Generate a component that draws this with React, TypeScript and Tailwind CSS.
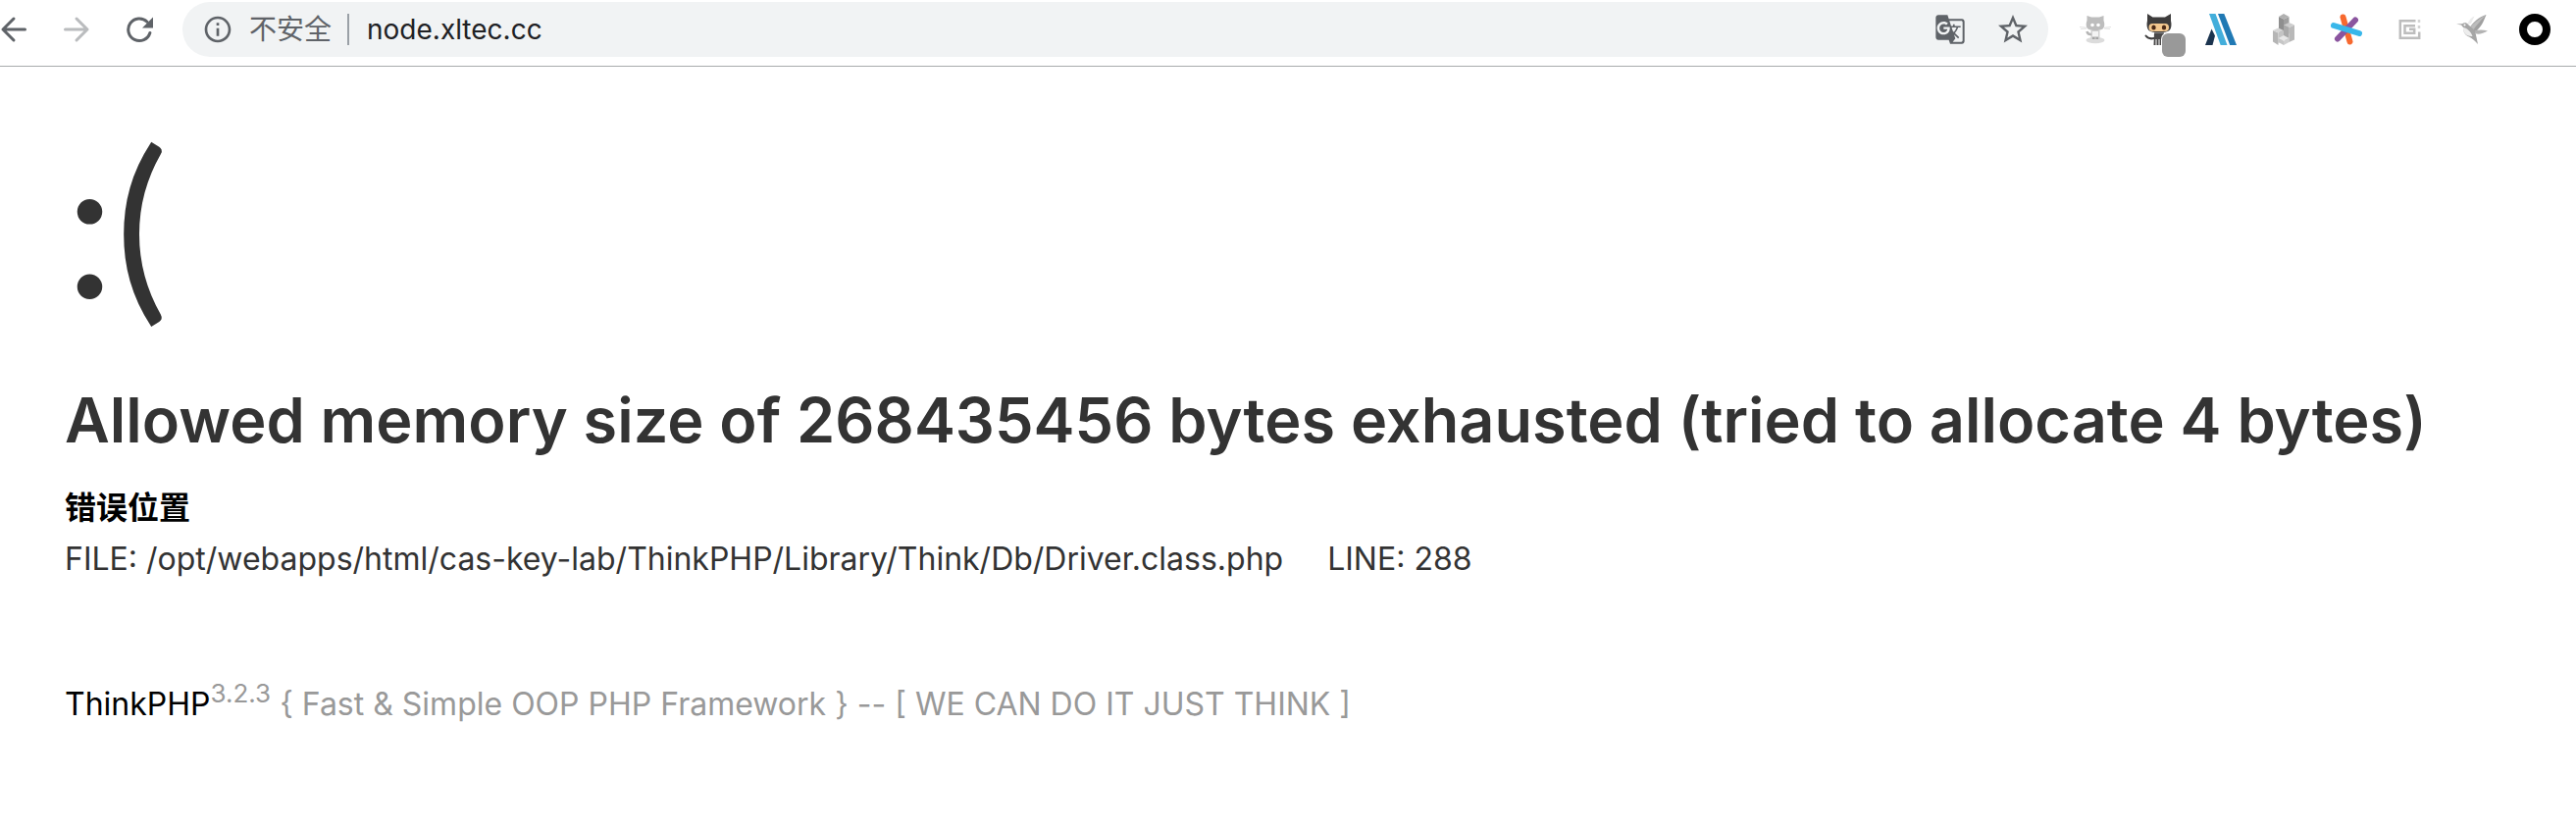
import type { ReactNode } from "react";
import { MdGTranslate, MdStarBorder, MdInfoOutline } from "react-icons/md";

function IconButton({ label, children }: { label: string; children: ReactNode }) {
  return (
    <button type="button" aria-label={label} className="relative shrink-0">
      {children}
    </button>
  );
}

function BackIcon() {
  return (
    <svg className="h-7 w-7" viewBox="0 0 28 28" fill="none" stroke="#5f6368" strokeWidth="3" strokeLinecap="round" strokeLinejoin="round">
      <path d="M25.5 14H3M14 3 3 14l11 11" />
    </svg>
  );
}

function ForwardIcon() {
  return (
    <svg className="h-7 w-7" viewBox="0 0 28 28" fill="none" stroke="#babcbe" strokeWidth="3" strokeLinecap="round" strokeLinejoin="round">
      <path d="M2.5 14H25M14 3l11 11-11 11" />
    </svg>
  );
}

function ReloadIcon() {
  return (
    <svg className="h-7 w-7" viewBox="0 0 28 28">
      <path d="M22 6.200A11.3 11.3 0 1 0 24.900 17.500" fill="none" stroke="#5f6368" strokeWidth="3" strokeLinecap="round" />
      <path d="M28 1.5V12.500H17z" fill="#5f6368" />
    </svg>
  );
}

function GrayCatIcon() {
  return (
    <svg className="h-8 w-8" viewBox="0 0 32 32">
      <ellipse cx="16" cy="27" rx="9.500" ry="3.200" fill="#dcdcdc" />
      <path d="M0 13.5l7 .8M1 15.500l6-.5M32 13.5l-7 .8M31 15.500l-6-.5" stroke="#e2e2e2" strokeWidth="1" />
      <path d="M7.500 2 12 3.500h8L24.500 2v5c1.300 3 1 7-1 8.500-2 1.300-5 1.500-7.500 1.500s-5.500-.2-7.500-1.500c-2-1.500-2.300-5.500-1-8.500z" fill="#bdbdbd" />
      <circle cx="13" cy="11.500" r="1.800" fill="#fff" />
      <circle cx="19" cy="11.500" r="1.800" fill="#fff" />
      <path d="M11.500 17h9v9h-9z" fill="#d0d0d0" />
      <path d="M13 18h6v5h-6z" fill="#f4f4f4" />
      <path d="M13 24h2.500v2H13zM16.500 24H19v2h-2.500z" fill="#a5a5a5" />
      <path d="M12 21c-3 .5-4-.5-4.500-3" fill="none" stroke="#b5b5b5" strokeWidth="2.500" />
    </svg>
  );
}

function OctocatIcon() {
  return (
    <svg className="h-8 w-8" viewBox="0 0 32 32">
      <path d="M5 0l5.500 3.500h12.500L29 0v7c1 4 .5 8-1.500 10-2 1.800-6 2.300-10.500 2.300S8.500 18.800 6.500 17C4.500 15 4 11 5 7z" fill="#3d3c3c" />
      <rect x="6.500" y="10" width="20.500" height="8" rx="4" fill="#f3c88f" />
      <ellipse cx="11.500" cy="14" rx="2.200" ry="2.500" fill="#4a2a17" />
      <ellipse cx="22" cy="14" rx="2.200" ry="2.500" fill="#4a2a17" />
      <path d="M3.500 22.500c2 2.500 4.500 3.500 8 2.500" fill="none" stroke="#3d3c3c" strokeWidth="2" strokeLinecap="round" />
      <path d="M12 19.500h10V32h-1.500v-6h-1v6h-2v-6h-1v6h-2v-6h-1v6H11.500z" fill="#4a4949" />
    </svg>
  );
}

function StripesIcon() {
  return (
    <svg className="h-8 w-8" viewBox="0 0 32 32">
      <path d="M0 32 6.500 15.500 10 22.500 7.500 32z" fill="#1b344f" />
      <path d="M4 0h6.500l12 32h-6.800z" fill="#43aedb" />
      <path d="M13 0h6.300L32 32h-6.800z" fill="#2079b4" />
    </svg>
  );
}

function BlocksIcon() {
  return (
    <svg className="h-8 w-8" viewBox="0 0 32 32">
      <path d="M11 3l5 2.500V22l-5-2z" fill="#8f8f8f" />
      <path d="M16 5.500 21.500 3v17L16 22z" fill="#9f9f9f" />
      <path d="M11 3 16 0l5.500 3L16 5.500z" fill="#b0b0b0" />
      <path d="M16 11.500l5.500 2.500v15L16 26z" fill="#a9a9a9" />
      <path d="M21.500 14 27 11.500v15L21.500 29z" fill="#b9b9b9" />
      <path d="M16 11.500 21.500 9l5.500 2.500-5.500 2.500z" fill="#cdcdcd" />
      <path d="M5 17l5.500 2.500V32L5 28.500z" fill="#b5b5b5" />
      <path d="M10.500 19.500 16 17v9l-5.500 4z" fill="#c4c4c4" />
      <path d="M5 17l5.500-2.500L16 17l-5.500 2.500z" fill="#d6d6d6" />
      <path d="M10.500 25l5.500 2.500V32l-5.500-3z" fill="#c6c6c6" />
      <path d="M16 27.500l5.500-2.500v4L16 32z" fill="#d0d0d0" />
      <path d="M10.500 25l5.500-3 5.500 3-5.500 2.500z" fill="#e8e8e8" />
    </svg>
  );
}

function AsteriskIcon() {
  return (
    <svg className="h-8 w-8" viewBox="0 0 32 32" fill="none" strokeWidth="6" strokeLinecap="round">
      <path d="M12.500 3.500l7 25" stroke="#f7692f" />
      <path d="M25 6.500 7 25.500" stroke="#8b559f" />
      <path d="M3 12l26 8" stroke="#38b7ea" />
    </svg>
  );
}

function SpiralIcon() {
  return (
    <svg className="h-8 w-8" viewBox="0 0 32 32" fill="none" stroke="#bdbdbd" strokeWidth="2.500">
      <path d="M22.500 7.300H6.800v17.400h19.400V18.500" />
      <path d="M22 12.300H11.500v7.400h9.700v-4H16" />
      <path d="M26 6v3M26 12v3" stroke="#d4d4d4" />
    </svg>
  );
}

function BirdIcon() {
  return (
    <svg className="h-8 w-8" viewBox="0 0 32 32">
      <path d="M11 11C13 6 16 3.500 18.500 2.500L15 10z" fill="#ececec" />
      <path d="M13 15C17 9 23 3 30.500 1 28 7 26 13 20 18z" fill="#a0a0a0" />
      <path d="M13 15C17 10 23 5 30.500 1 25 7 20 12 17 17z" fill="#bcbcbc" />
      <path d="M18 17.500c5-1.500 9-1.500 14 0-4 2.500-8 3.500-12 3z" fill="#b3b3b3" />
      <path d="M0 10.500l6-.3C8 8.500 11 9 12 11l7 6 3 14c-4-4-6-6-9-7.500-5-2-6-6-5.500-9L5 11.500z" fill="#a6a6a6" />
      <path d="M7 14c3 0 8 4 9.500 9C10 23.500 6.500 19 7 14z" fill="#ededed" />
      <circle cx="8.500" cy="11.500" r="1" fill="#fff" />
    </svg>
  );
}

function RingIcon() {
  return (
    <svg className="h-8 w-8" viewBox="0 0 32 32">
      <circle cx="16" cy="16" r="12" fill="none" stroke="#000" strokeWidth="8" />
    </svg>
  );
}

function Toolbar() {
  return (
    <header className="flex h-[68px] items-start border-b border-[#a8abad] pt-0.5 pr-[26px]">
      <nav className="flex h-14 shrink-0 items-center gap-9">
        <IconButton label="后退"><BackIcon /></IconButton>
        <IconButton label="前进"><ForwardIcon /></IconButton>
        <IconButton label="重新加载"><ReloadIcon /></IconButton>
      </nav>
      <div className="ml-[30px] flex h-14 min-w-0 flex-1 items-center rounded-full bg-[#f1f3f4] pr-[18px] pl-5">
        <button type="button" className="flex shrink-0 items-center gap-4 text-[28px] text-[#5f6368]">
          <MdInfoOutline className="h-8 w-8" />
          不安全
        </button>
        <span className="mr-[18px] ml-4 h-8 w-0.5 bg-[#9aa0a6]" />
        <input
          aria-label="地址"
          defaultValue="node.xltec.cc"
          className="min-w-0 flex-1 bg-transparent text-[28px] text-[#202124] outline-none"
        />
        <div className="flex items-center gap-[30px] text-[#5f6368]">
          <IconButton label="翻译此页"><MdGTranslate className="h-8 w-8" /></IconButton>
          <IconButton label="收藏"><MdStarBorder className="h-9 w-9" /></IconButton>
        </div>
      </div>
      <div className="flex h-14 shrink-0 items-center gap-8 pl-8">
        <IconButton label="Cat"><GrayCatIcon /></IconButton>
        <IconButton label="Octocat">
          <OctocatIcon />
          <span className="absolute top-5 left-5 h-6 w-6 rounded-md bg-[#999999] ring-1 ring-white" />
        </IconButton>
        <IconButton label="Stripes"><StripesIcon /></IconButton>
        <IconButton label="Blocks"><BlocksIcon /></IconButton>
        <IconButton label="Asterisk"><AsteriskIcon /></IconButton>
        <IconButton label="Spiral"><SpiralIcon /></IconButton>
        <IconButton label="Bird"><BirdIcon /></IconButton>
        <IconButton label="Ring"><RingIcon /></IconButton>
      </div>
    </header>
  );
}

export default function App() {
  return (
    <div className="min-h-screen bg-white font-['Inter','Noto_Sans_CJK_SC',sans-serif] text-[#333333]">
      <Toolbar />
      <main className="px-[66px] pt-9 pb-16">
        <p className="font-['Lato','Inter',sans-serif] text-[204px] leading-[240px]">:(</p>
        <h1 className="mt-11 text-[63px] leading-[80px] font-semibold">
          Allowed memory size of 268435456 bytes exhausted (tried to allocate 4 bytes)
        </h1>
        <section className="pt-[26px] text-[32px] leading-[48px]">
          <h3 className="font-bold text-black">错误位置</h3>
          <p className="mt-1">
            FILE: /opt/webapps/html/cas-key-lab/ThinkPHP/Library/Think/Db/Driver.class.php &nbsp;&nbsp;&nbsp;&nbsp;LINE: 288
          </p>
        </section>
        <p className="mt-[100px] text-[32px] leading-[48px] text-[#999999]">
          <a href="#" className="text-black">ThinkPHP</a>
          <sup className="text-[26px]">3.2.3</sup>
          {" { Fast & Simple OOP PHP Framework } -- [ WE CAN DO IT JUST THINK ]"}
        </p>
      </main>
    </div>
  );
}
